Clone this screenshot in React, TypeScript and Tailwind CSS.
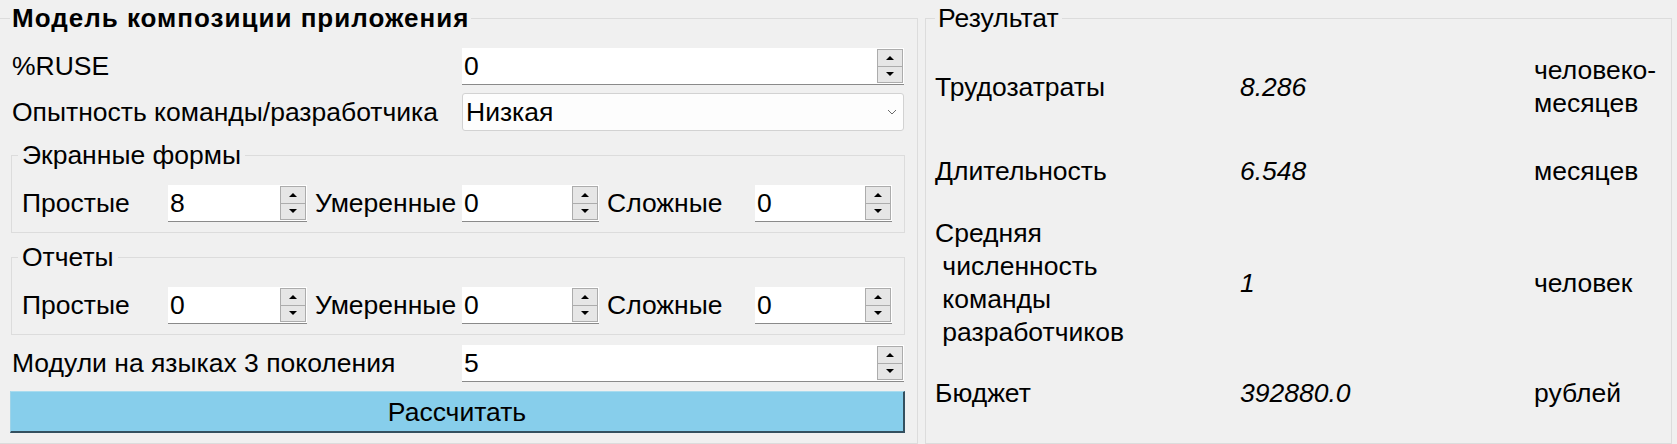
import React from "react"

function SpinButtons() {
  return (
    <div className="my-px mr-px flex w-[26px] shrink-0 flex-col border border-[#acacac] bg-[#e6e6e6]">
      <div className="flex flex-1 items-center justify-center border-b border-[#acacac]">
        <span className="h-0 w-0 border-x-[4px] border-b-[4px] border-x-transparent border-b-black" />
      </div>
      <div className="flex flex-1 items-center justify-center">
        <span className="h-0 w-0 border-x-[4px] border-t-[4px] border-x-transparent border-t-black" />
      </div>
    </div>
  )
}

function SpinBox({ value, width }: { value: string; width: string }) {
  return (
    <div className={`flex h-[37px] shrink-0 border-b border-[#8a8a8a] bg-white ${width}`}>
      <span className="flex-1 self-center pl-[2px] leading-[30px]">{value}</span>
      <SpinButtons />
    </div>
  )
}

function CountGroup({ title, values }: { title: string; values: string[] }) {
  return (
    <fieldset className="ml-px mt-[7px] w-[894px] border border-[#dcdcdc] pb-[10px] pl-[6px]">
      <legend className="px-[4px] leading-[34px]">{title}</legend>
      <div className="mt-[13px] flex items-center pl-[4px]">
        <span className="w-[146px]">Простые</span>
        <SpinBox value={values[0]} width="w-[139px]" />
        <span className="ml-[8px] w-[147px]">Умеренные</span>
        <SpinBox value={values[1]} width="w-[137px]" />
        <span className="ml-[8px] w-[148px]">Сложные</span>
        <SpinBox value={values[2]} width="w-[137px]" />
      </div>
    </fieldset>
  )
}

function ResultRow({ label, value, unit, className }: { label: string; value: string; unit: string; className: string }) {
  return (
    <div className={`grid grid-cols-[303px_294px_1fr] items-center leading-[33px] ${className}`}>
      <span className="whitespace-pre">{label}</span>
      <span className="pl-[2px] italic">{value}</span>
      <span className="whitespace-pre pl-[2px]">{unit}</span>
    </div>
  )
}

export default function App() {
  return (
    <div className="flex h-[444px] w-[1677px] overflow-hidden bg-[#f0f0f0] font-['Liberation_Sans','DejaVu_Sans',sans-serif] text-[26.5px] leading-[33px] text-black">
      <fieldset className="h-[444px] w-[917px] shrink-0 border border-l-0 border-[#dcdcdc] pl-[10px] pr-[12px]">
        <legend className="px-[2px] text-[26px] font-bold leading-[36px] tracking-[1px]">Модель композиции приложения</legend>

        <div className="mt-[12px] flex items-center">
          <span className="w-[452px] pl-[2px]">%RUSE</span>
          <SpinBox value="0" width="w-[442px]" />
        </div>

        <div className="mt-[8px] flex items-center">
          <span className="w-[452px] pl-[2px]">Опытность команды/разработчика</span>
          <div className="flex h-[38px] w-[442px] items-center justify-between rounded-[3px] border border-[#d2d2d2] bg-[#fdfdfd] pl-[3px] pr-[6px]">
            <span>Низкая</span>
            <svg width="10" height="6" viewBox="0 0 10 6" className="text-[#6a6a6a]">
              <polyline points="1,1 5,5 9,1" fill="none" stroke="currentColor" strokeWidth="1" />
            </svg>
          </div>
        </div>

        <CountGroup title="Экранные формы" values={["8", "0", "0"]} />
        <CountGroup title="Отчеты" values={["0", "0", "0"]} />

        <div className="mt-[10px] flex items-center">
          <span className="w-[452px] pl-[2px]">Модули на языках 3 поколения</span>
          <SpinBox value="5" width="w-[442px]" />
        </div>

        <button
          type="button"
          className="mt-[9px] h-[42px] w-[895px] border-b-2 border-l border-r-2 border-t border-b-[#34505f] border-l-[#9ed3e8] border-r-[#34505f] border-t-[#a9dcef] bg-[#87ceeb] leading-[38px]"
        >
          Рассчитать
        </button>
      </fieldset>

      <fieldset className="ml-[7px] h-[444px] w-[747px] shrink-0 border border-[#dcdcdc] pl-[9px]">
        <legend className="px-[3px] leading-[36px]">Результат</legend>
        <ResultRow className="mt-[18px]" label="Трудозатраты" value="8.286" unit={"человеко-\nмесяцев"} />
        <ResultRow className="mt-[35px]" label="Длительность" value="6.548" unit="месяцев" />
        <ResultRow
          className="mt-[29px]"
          label={"Средняя\n численность\n команды\n разработчиков"}
          value="1"
          unit="человек"
        />
        <ResultRow className="mt-[28px]" label="Бюджет" value="392880.0" unit="рублей" />
      </fieldset>
    </div>
  )
}
